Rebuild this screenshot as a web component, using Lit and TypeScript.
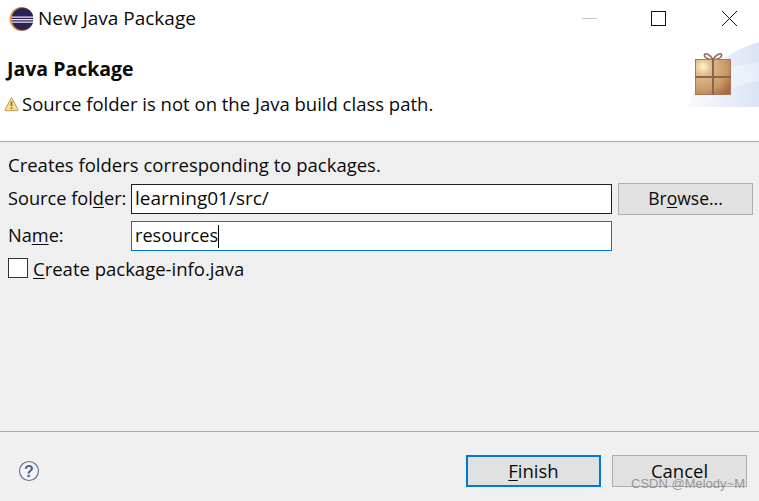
import { LitElement, html, css } from "lit";
import { customElement } from "lit/decorators.js";

@customElement("app-root")
export class AppRoot extends LitElement {
  static styles = css`
    :host { display: block; width: 759px; height: 501px; overflow: hidden; position: relative; background: #f0f0f0; font-family: "Open Sans", "Noto Sans", sans-serif; font-size: 18.5px; color: #0a0a0a; }
    * { box-sizing: border-box; }
    u { text-underline-offset: 2px; text-decoration-thickness: 1px; }
    .title { height: 38px; background: #fff; display: flex; align-items: center; padding-left: 9px; gap: 5px; position: relative; }
    .title .t { font-size: 19px; line-height: 24px; margin-top: -2px; }
    .winbtns { margin-left: auto; display: flex; align-items: center; padding-right: 22px; gap: 54px; margin-top: -1px; }
    .winbtns svg:last-child { margin-left: 2px; }
    .header { height: 103px; background: #fff; position: relative; padding: 19px 0 0 7px; }
    .h1 { font-weight: 700; font-size: 19.5px; line-height: 24px; }
    .msg { display: flex; align-items: center; gap: 3px; margin: 11px 0 0 -3px; line-height: 24px; }
    .banner { position: absolute; right: 0; top: 4px; }
    .rule { height: 1px; background: #a9a9a9; }
    .body { height: 289px; background: #efefef; padding: 11px 6px 0 8px; display: flex; flex-direction: column; }
    .lead { line-height: 24px; height: 30px; }
    .row { display: flex; align-items: center; height: 32px; }
    .row + .row { margin-top: 5px; }
    .lbl { width: 123px; white-space: nowrap; font-size: 18.2px; padding-bottom: 2px; }
    .field { width: 481px; height: 30px; background: #fff; border: 1px solid #1f1f1f; display: flex; align-items: center; padding: 0 0 2px 3px; }
    .field.src { font-size: 19px; }
    .field.focus { border-color: #0078d7; font-size: 18.1px; }
    .caret { display: inline-block; width: 1px; height: 23px; background: #000; margin-top: 2px; }
    .btn { width: 135px; height: 32px; background: #e1e1e1; border: 1px solid #adadad; display: flex; align-items: center; justify-content: center; padding-bottom: 2px; }
    .browse { margin-left: 6px; font-size: 17.5px; }
    .check { display: flex; align-items: center; gap: 5px; margin-top: 3px; height: 26px; }
    .box { width: 20px; height: 20px; background: #fff; border: 1px solid #333; }
    .footer { height: 69px; background: #f0f0f0; display: flex; align-items: center; padding: 9px 12px 0 18px; }
    .footer .btn + .btn { margin-left: 11px; }
    .help { margin-right: auto; display: block; }
    .default { border: 2px solid #0078d7; }
    .wm { position: absolute; left: 631px; top: 475px; font-family: "Liberation Sans", sans-serif; font-size: 13px; line-height: 18px; color: rgba(125,125,125,.75); white-space: nowrap; }
  `;

  render() {
    return html`
      <div class="title">
        <svg width="24" height="24" viewBox="0 0 24 24">
          <defs><linearGradient id="eo" x1="0" x2="1"><stop offset="0" stop-color="#f2a63c"/><stop offset="1" stop-color="#6a4a5a"/></linearGradient></defs>
          <circle cx="12.500" cy="12" r="12" fill="url(#eo)"/>
          <circle cx="13.500" cy="12" r="11" fill="#2c2255"/>
          <path d="M2.500 9.500h22v1.300h-22zM2.200 12h22.600v1.300H2.200zM3 14.500h21v1.200H3z" fill="#e8e6f2"/>
        </svg>
        <span class="t">New Java Package</span>
        <div class="winbtns">
          <svg width="15" height="15" viewBox="0 0 15 15"><path d="M0 7.500h15" stroke="#c4c4c4"/></svg>
          <svg width="15" height="15" viewBox="0 0 15 15"><rect x=".5" y=".5" width="14" height="14" fill="none" stroke="#111"/></svg>
          <svg width="15" height="15" viewBox="0 0 15 15"><path d="M0 0l15 15M15 0L0 15" stroke="#111"/></svg>
        </div>
      </div>
      <div class="header">
        <svg class="banner" width="71" height="65" viewBox="0 0 71 65">
          <defs><linearGradient id="bg" x1="0" x2="1"><stop offset="0" stop-color="#f9fafd"/><stop offset="1" stop-color="#dbe3f4"/></linearGradient>
          <radialGradient id="gift" cx=".22" cy=".22" r=".95"><stop offset="0" stop-color="#fdf3cf"/><stop offset=".25" stop-color="#dfbd8d"/><stop offset=".7" stop-color="#c99768"/><stop offset="1" stop-color="#a9683c"/></radialGradient></defs>
          <path d="M0 65C8 35 35 10 71 0v65z" fill="url(#bg)"/>
          <path d="M20 40C35 25 52 22 71 21v18C52 42 35 48 20 60z" fill="#fff" opacity=".35"/>
          <path d="M25 17.500c-2-4-7-7-8.500-5-1 3 3.500 5 8.500 5 5 0 9.500-2 8.500-5-1.500-2-6.500 1-8.500 5" fill="none" stroke="#96695a" stroke-width="1.500"/>
          <rect x="7" y="17" width="36" height="36" fill="url(#gift)"/>
          <rect x="7.500" y="17.500" width="35" height="35" fill="none" stroke="#a8795f"/>
          <path d="M25 17v36M7 35h36" stroke="#8d6353" stroke-width="2"/>
        </svg>
        <div class="h1">Java Package</div>
        <div class="msg">
          <svg width="15" height="16" viewBox="0 0 15 16"><path d="M7.500 1.500L14 13.500a1 1 0 0 1-1 1.200H2a1 1 0 0 1-1-1.200z" fill="#f8dc8e" stroke="#c09a58" stroke-linejoin="round"/><path d="M7.500 5.500v4.500M7.500 11.300v1.700" stroke="#8a6a2a" stroke-width="1.600"/></svg>
          <span>Source folder is not on the Java build class path.</span>
        </div>
      </div>
      <div class="rule"></div>
      <div class="body">
        <div class="lead">Creates folders corresponding to packages.</div>
        <div class="row">
          <span class="lbl">Source fol<u>d</u>er:</span>
          <div class="field src">learning01/src/</div>
          <div class="btn browse"><span>Br<u>o</u>wse...</span></div>
        </div>
        <div class="row">
          <span class="lbl">Na<u>m</u>e:</span>
          <div class="field focus">resources<span class="caret"></span></div>
        </div>
        <div class="check"><span class="box"></span><span><u>C</u>reate package-info.java</span></div>
      </div>
      <div class="rule"></div>
      <div class="footer">
        <svg class="help" width="22" height="22" viewBox="0 0 22 22"><circle cx="11" cy="11" r="9.500" fill="#f5f5f8" stroke="#5e7596" stroke-width="1.200"/><text x="11" y="16.500" text-anchor="middle" font-family="Liberation Sans" font-weight="700" font-size="16" fill="#4a628a">?</text></svg>
        <div class="btn default"><span><u>F</u>inish</span></div>
        <div class="btn"><span>Cancel</span></div>
      </div>
      <div class="wm">CSDN @Melody~M</div>
    `;
  }
}
